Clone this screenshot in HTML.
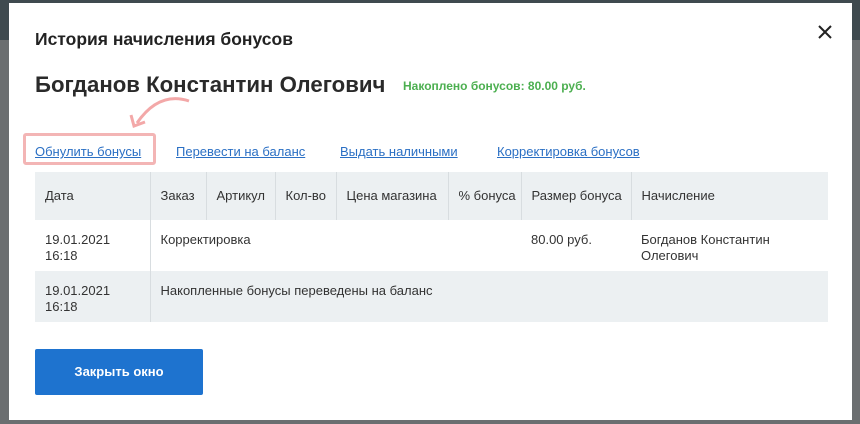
<!DOCTYPE html>
<html><head><meta charset="utf-8"><style>
body{margin:0;width:860px;height:424px;background:#6b6e70;position:relative;overflow:hidden;font-family:"Liberation Sans","Noto Sans CJK SC",sans-serif;}
.bgtop{position:absolute;left:0;top:0;width:860px;height:40px;background:#3f4a4f}
.modal{position:absolute;left:9px;top:3px;width:843px;height:417px;background:#fff}
.abs{position:absolute;white-space:nowrap}
h1{position:absolute;left:26px;top:26px;margin:0;font-size:17.5px;font-weight:bold;color:#222}
.name{left:26px;top:69px;font-size:22.2px;font-weight:bold;color:#2a2a2a}
.acc{left:394px;top:76px;font-size:12px;font-weight:bold;color:#4caf50}
a{color:#2a6fc4;text-decoration:underline;font-size:13px;position:absolute;top:141px;white-space:nowrap}
table{position:absolute;left:26px;top:169px;width:793px;border-collapse:collapse;table-layout:fixed;font-size:13px;color:#333}
td,th{font-weight:normal;text-align:left;vertical-align:top;padding:16px 10px 0 10px;line-height:16px;white-space:nowrap;overflow:hidden}
th{border-left:1px solid #d8dde0}
tr th:first-child{border-left:none}
td:nth-child(2){border-left:1px solid #d8dde0}
thead tr{background:#ecf0f2;height:48px}
tbody tr{height:51px}
td{padding-top:12px}
.btn{position:absolute;left:26px;top:346px;width:168px;height:46px;background:#1e73cf;color:#fff;font-weight:bold;font-size:13px;text-align:center;line-height:46px;border-radius:2px}
.hl{position:absolute;left:14px;top:130px;width:127px;height:26px;border:3px solid #f3b5b5;border-radius:3px}
</style></head><body>
<div class="bgtop"></div>
<div class="modal">
<h1>История начисления бонусов</h1>
<svg class="abs" style="left:809px;top:22px" width="14" height="14"><path d="M1 1L13 13M13 1L1 13" stroke="#222" stroke-width="2"/></svg>
<div class="abs name">Богданов Константин Олегович</div>
<div class="abs acc">Накоплено бонусов: 80.00 руб.</div>
<svg class="abs" style="left:108px;top:90px" width="80" height="40"><path d="M72 8 Q42 -2 20 30" fill="none" stroke="#f3a8a8" stroke-width="3"/><path d="M14 22 L17 33 L28 29" fill="none" stroke="#f3a8a8" stroke-width="3"/></svg>
<div class="hl"></div>
<a style="left:26px">Обнулить бонусы</a>
<a style="left:167px">Перевести на баланс</a>
<a style="left:331px">Выдать наличными</a>
<a style="left:488px">Корректировка бонусов</a>
<table>
<colgroup><col style="width:115px"><col style="width:56px"><col style="width:69px"><col style="width:61px"><col style="width:112px"><col style="width:73px"><col style="width:110px"><col style="width:197px"></colgroup>
<thead><tr><th>Дата</th><th>Заказ</th><th>Артикул</th><th>Кол-во</th><th>Цена магазина</th><th>% бонуса</th><th>Размер бонуса</th><th>Начисление</th></tr></thead>
<tbody>
<tr style="background:#fff"><td>19.01.2021<br>16:18</td><td colspan="5">Корректировка</td><td>80.00 руб.</td><td>Богданов Константин<br>Олегович</td></tr>
<tr style="background:#ecf0f2"><td>19.01.2021<br>16:18</td><td colspan="7">Накопленные бонусы переведены на баланс</td></tr>
</tbody></table>
<div class="btn">Закрыть окно</div>
</div>
</body></html>
